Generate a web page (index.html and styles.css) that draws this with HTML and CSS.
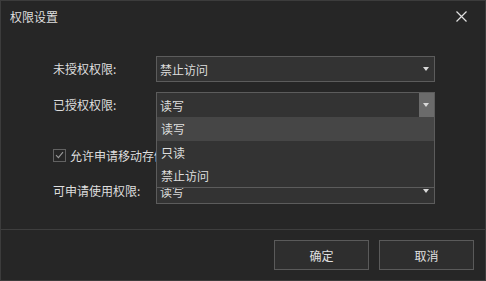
FILE: index.html
```html
<!DOCTYPE html>
<html lang="zh-CN">
<head>
    <meta charset="UTF-8">
    <meta name="viewport" content="width=device-width, initial-scale=1.0">
    <title>权限设置</title>
    <link rel="stylesheet" href="styles.css">
</head>
<body>
    <div class="dialog">
        <div class="title-bar">
            <span class="title">权限设置</span>
            <span class="close">
                <svg width="11" height="11" viewBox="0 0 11 11">
                    <path d="M0.5 0.5 L10.5 10.5 M10.5 0.5 L0.5 10.5" stroke="#e0e0e0" stroke-width="1.2" fill="none"/>
                </svg>
            </span>
        </div>

        <div class="form">
            <div class="label">未授权权限:</div>
            <div class="select">
                <span class="value">禁止访问</span>
                <span class="arrow"></span>
            </div>

            <div class="label">已授权权限:</div>
            <div class="select open">
                <span class="value">读写</span>
                <span class="arrow"></span>
                <ul class="options">
                    <li class="active">读写</li>
                    <li>只读</li>
                    <li>禁止访问</li>
                </ul>
            </div>

            <div class="check-row">
                <span class="checkbox">
                    <svg width="9" height="8" viewBox="0 0 9 8">
                        <path d="M1 4.2 L3.4 6.6 L8 1.2" stroke="#9a9a9a" stroke-width="1.1" fill="none"/>
                    </svg>
                </span>
                <span class="check-text">允许申请移动存储设备</span>
            </div>

            <div class="label">可申请使用权限:</div>
            <div class="select">
                <span class="value">读写</span>
                <span class="arrow"></span>
            </div>
        </div>

        <div class="footer">
            <button>确定</button>
            <button>取消</button>
        </div>
    </div>
</body>
</html>
```

FILE: styles.css
```css
* {
    box-sizing: border-box;
}
body {
    margin: 0;
    background-color: #262626;
    font-family: "Microsoft YaHei", "Noto Sans CJK SC", sans-serif;
    font-size: 12px;
    color: #dedede;
}
.dialog {
    width: 486px;
    height: 281px;
    border: 1px solid #3c3c3c;
    display: flex;
    flex-direction: column;
}
.title-bar {
    height: 30px;
    display: flex;
    align-items: center;
    justify-content: space-between;
    padding: 0 18px 0 9px;
}
.close {
    display: flex;
    width: 11px;
    height: 11px;
}
.form {
    flex: 1;
    display: grid;
    grid-template-columns: 103px 279px;
    align-content: start;
    align-items: center;
    padding: 25px 0 0 52px;
    row-gap: 10px;
}
.label {
    line-height: 26px;
}
.select {
    position: relative;
    height: 26px;
    border: 1px solid #5c5c5c;
    background-color: #333333;
    display: flex;
    align-items: center;
    padding-left: 3px;
}
.value {
    flex: 1;
}
.arrow {
    width: 15px;
    height: 24px;
    position: relative;
}
.arrow::after {
    content: "";
    position: absolute;
    left: 4px;
    top: 10px;
    border-left: 3px solid transparent;
    border-right: 3px solid transparent;
    border-top: 4px solid #d8d8d8;
}
.open .arrow {
    background-color: #6b6b6b;
}
.options {
    position: absolute;
    left: -1px;
    right: -1px;
    top: 100%;
    margin: 0;
    padding: 0;
    list-style: none;
    background-color: #333333;
    border: 1px solid #5c5c5c;
    border-top: none;
    z-index: 2;
}
.options li {
    height: 23px;
    line-height: 23px;
    padding-left: 4px;
}
.options li.active {
    height: 24px;
    line-height: 24px;
    background-color: #464646;
}
/* the open list covers the end of this row */
.check-row {
    grid-column: 1 / -1;
    width: 104px;
    display: flex;
    align-items: center;
    gap: 4px;
    height: 20px;
    margin: 17px 0 3px;
    white-space: nowrap;
    overflow: hidden;
}
.checkbox {
    flex: none;
    width: 13px;
    height: 13px;
    border: 1px solid #626262;
    display: flex;
    align-items: center;
    justify-content: center;
}
.footer {
    border-top: 1px solid #3e3e3e;
    display: flex;
    justify-content: flex-end;
    gap: 10px;
    padding: 10px 11px 10px 0;
}
.footer button {
    width: 95px;
    height: 30px;
    background-color: #2e2e2e;
    border: 1px solid #5a5a5a;
    color: #e0e0e0;
    font-family: inherit;
    font-size: 12px;
}
```
